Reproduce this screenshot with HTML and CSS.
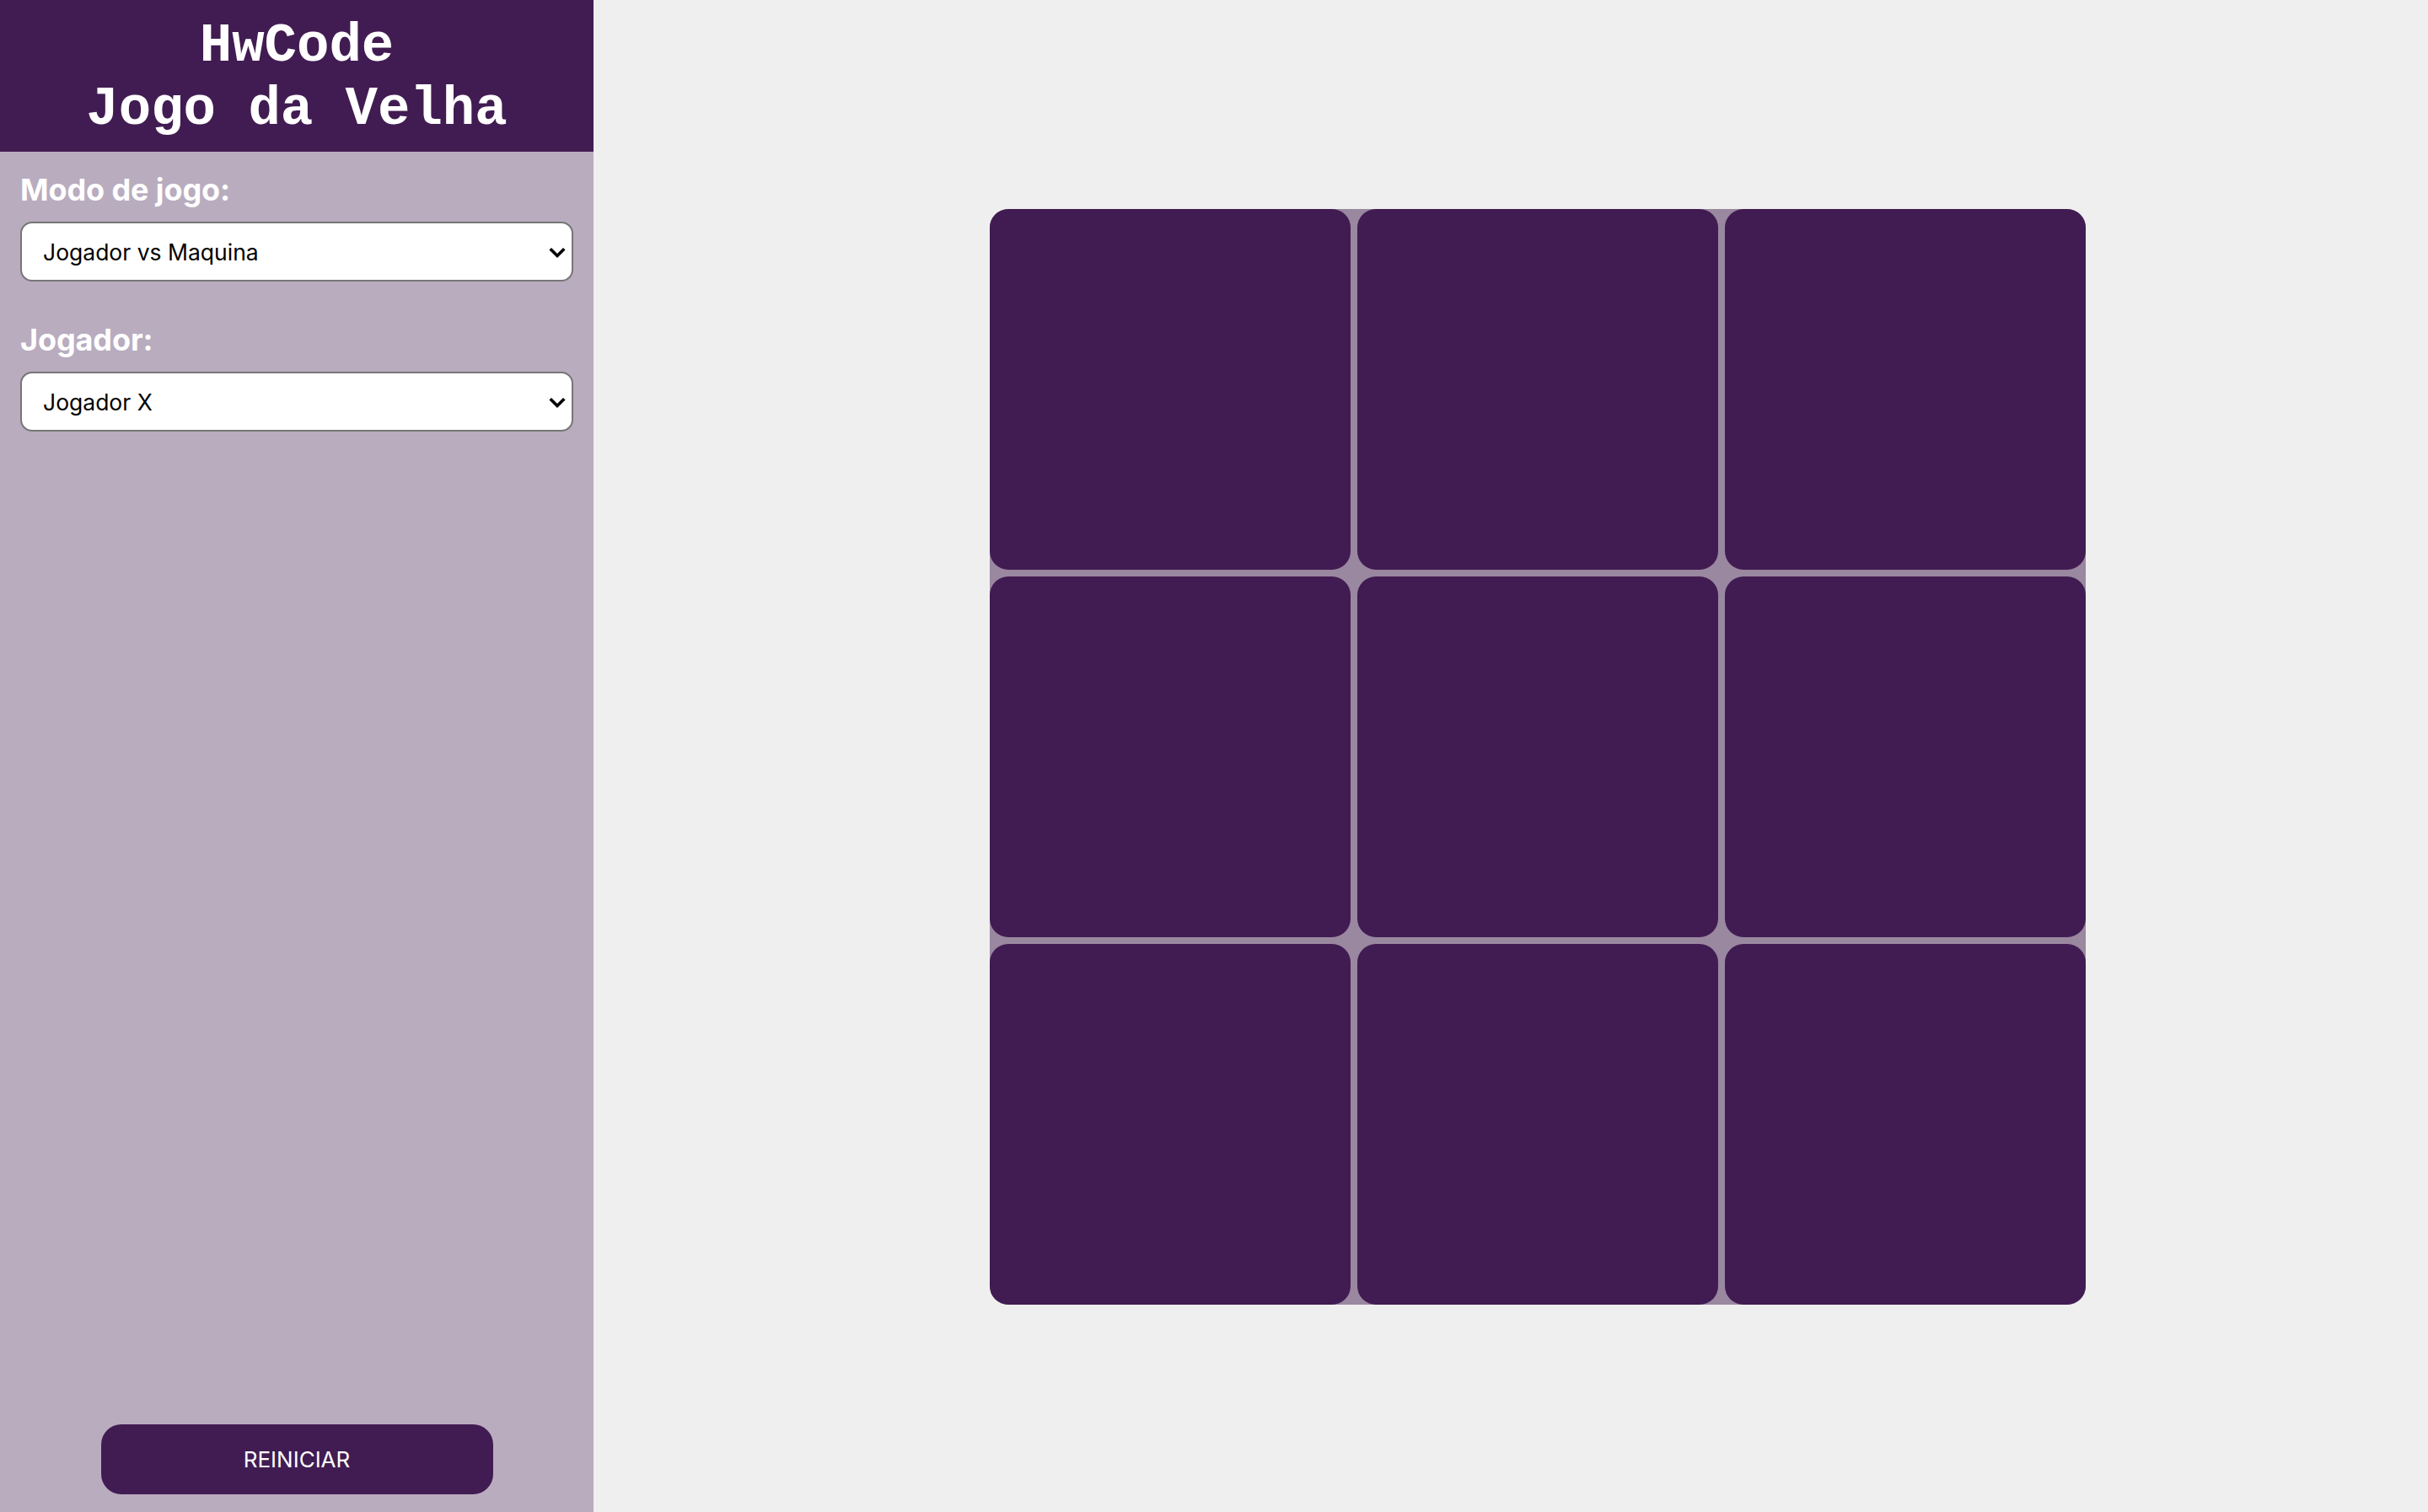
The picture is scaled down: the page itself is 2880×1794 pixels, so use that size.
FILE: index.html
```html
<!DOCTYPE html>
<html lang="pt-BR">
<head>
<meta charset="utf-8">
<title>HwCode - Jogo da Velha</title>
<link rel="stylesheet" href="styles.css">
</head>
<body>
<div class="app">
  <aside class="sidebar">
    <header class="brand">
      <h1 class="brand-title">HwCode<br>Jogo da Velha</h1>
    </header>
    <div class="controls">
      <label class="field-label" for="modo">Modo de jogo:</label>
      <div class="select-wrap">
        <select id="modo" class="select">
          <option>Jogador vs Maquina</option>
          <option>Jogador vs Jogador</option>
        </select>
        <svg class="chevron" viewBox="0 0 20 14" width="20" height="14" aria-hidden="true"><path d="M3 3.5 L10 10.5 L17 3.5" fill="none" stroke="#000" stroke-width="3.6" stroke-linecap="square"/></svg>
      </div>
      <label class="field-label second" for="jogador">Jogador:</label>
      <div class="select-wrap">
        <select id="jogador" class="select">
          <option>Jogador X</option>
          <option>Jogador O</option>
        </select>
        <svg class="chevron" viewBox="0 0 20 14" width="20" height="14" aria-hidden="true"><path d="M3 3.5 L10 10.5 L17 3.5" fill="none" stroke="#000" stroke-width="3.6" stroke-linecap="square"/></svg>
      </div>
    </div>
    <div class="actions">
      <button class="restart" type="button">REINICIAR</button>
    </div>
  </aside>
  <main class="stage">
    <div class="board">
      <div class="cell"></div>
      <div class="cell"></div>
      <div class="cell"></div>
      <div class="cell"></div>
      <div class="cell"></div>
      <div class="cell"></div>
      <div class="cell"></div>
      <div class="cell"></div>
      <div class="cell"></div>
    </div>
  </main>
</div>
</body>
</html>
```
FILE: styles.css
```css
* { box-sizing: border-box; }

html, body {
  margin: 0;
  padding: 0;
  height: 100%;
}

body {
  font-family: Inter, "Noto Sans", sans-serif;
  background: #efefef;
}

.app {
  display: flex;
  height: 100vh;
}

.sidebar {
  width: 704px;
  flex: 0 0 704px;
  background: #b9acbf;
  display: flex;
  flex-direction: column;
}

.brand {
  background: #411c52;
  height: 180px;
  padding-top: 5px;
  display: flex;
  align-items: center;
  justify-content: center;
}

.brand-title {
  margin: 0;
  font-family: "Liberation Mono", "Courier New", monospace;
  font-weight: bold;
  font-size: 64px;
  line-height: 75px;
  color: #ffffff;
  text-align: center;
}

.controls {
  padding: 26px 24px 0;
  display: flex;
  flex-direction: column;
}

.field-label {
  font-weight: 700;
  font-size: 36px;
  line-height: 39px;
  color: #ffffff;
  letter-spacing: -0.1px;
  margin-bottom: 18px;
}

.field-label.second {
  margin-top: 50px;
}

.select-wrap {
  position: relative;
}

.select {
  display: block;
  width: 100%;
  height: 71px;
  -webkit-appearance: none;
  appearance: none;
  background: #ffffff;
  border: 2px solid #767676;
  border-radius: 14px;
  padding: 0 60px 0 25px;
  font-family: Inter, "Noto Sans", sans-serif;
  font-size: 26.5px;
  color: #000000;
}

.chevron {
  position: absolute;
  right: 9px;
  top: 50%;
  margin-top: -6px;
  pointer-events: none;
}

.actions {
  margin-top: auto;
  display: flex;
  justify-content: center;
  padding-bottom: 21px;
}

.restart {
  width: 465px;
  height: 83px;
  border: none;
  border-radius: 24px;
  background: #411c52;
  color: #ffffff;
  font-family: Inter, "Noto Sans", sans-serif;
  font-size: 26px;
  cursor: pointer;
}

.stage {
  flex: 1;
  display: flex;
  align-items: center;
  justify-content: center;
  padding-left: 64px;
  padding-top: 2px;
}

.board {
  width: 1300px;
  height: 1300px;
  display: grid;
  grid-template-columns: repeat(3, 1fr);
  grid-template-rows: repeat(3, 1fr);
  gap: 8px;
  background: #9a87a0;
  border-radius: 22px;
}

.cell {
  background: #411c52;
  border-radius: 22px;
}
```
